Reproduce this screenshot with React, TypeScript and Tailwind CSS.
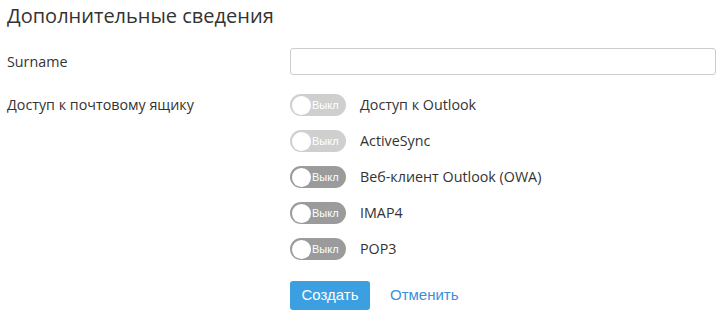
import React from 'react';

const protocols = [
  { label: 'Доступ к Outlook', disabled: true },
  { label: 'ActiveSync', disabled: true },
  { label: 'Веб-клиент Outlook (OWA)', disabled: false },
  { label: 'IMAP4', disabled: false },
  { label: 'POP3', disabled: false },
];

function Toggle({ disabled }: { disabled: boolean }) {
  return (
    <div
      className={`relative w-[56px] h-[22px] rounded-full flex items-center pl-[2px] ${
        disabled ? 'bg-[#cfcfcf]' : 'bg-[#9b9b9b]'
      }`}
    >
      <span className="w-[19px] h-[19px] rounded-full bg-white" />
      <span className="ml-[1px] text-[11px] text-white font-['Liberation_Sans',Arial,sans-serif]">Выкл</span>
    </div>
  );
}

export default function App() {
  return (
    <div className="w-[723px] h-[315px] bg-white text-[#333] font-['Open_Sans',sans-serif] relative">
      <h1 className="pl-[7px] pt-[2px] text-[20px] leading-[28px] text-[#333]">Дополнительные сведения</h1>

      <div className="flex items-center mt-[18px]">
        <div className="w-[290px] pl-[7px] text-[14.3px]">Surname</div>
        <input className="w-[426px] h-[27px] border border-[#ccc] rounded-[3px] outline-none" />
      </div>

      <div className="flex mt-[18px]">
        <div className="w-[290px] pl-[7px] text-[14.3px] leading-[22px] pt-[1px]">Доступ к почтовому ящику</div>
        <div className="flex flex-col gap-[14px] pt-[1px]">
          {protocols.map(p => (
            <div key={p.label} className="flex items-center">
              <Toggle disabled={p.disabled} />
              <span className="ml-[14px] text-[14.3px]">{p.label}</span>
            </div>
          ))}
        </div>
      </div>

      <div className="flex items-center pl-[290px] mt-[21px]">
        <button className="w-[80px] h-[29px] rounded-[3px] bg-[#3c9fe1] text-white text-[15px] font-['Liberation_Sans',Arial,sans-serif]">
          Создать
        </button>
        <a className="ml-[20px] text-[15px] text-[#3b8fd8] font-['Liberation_Sans',Arial,sans-serif]">Отменить</a>
      </div>
    </div>
  );
}
